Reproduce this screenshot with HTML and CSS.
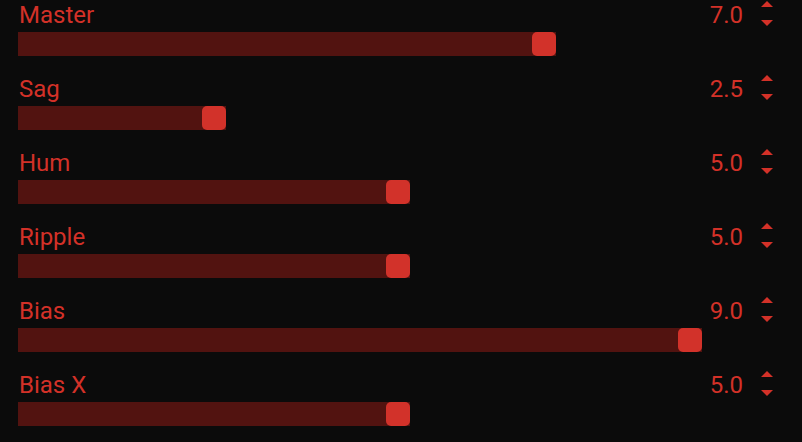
FILE: index.html
```html
<!DOCTYPE html>
<html>
<head>
<meta charset="utf-8">
<link rel="stylesheet" href="styles.css">
</head>
<body>
<div class="panel">
  <div class="row">
    <div class="head"><span class="label">Master</span><span class="value">7.0</span><svg class="spin" width="12" height="28" viewBox="0 0 12 28"><polygon points="6,1 12,7 0,7"/><polygon points="0,20 12,20 6,26"/></svg></div>
    <div class="track"><div class="fill" style="width:538px"><div class="knob"></div></div></div>
  </div>
  <div class="row">
    <div class="head"><span class="label">Sag</span><span class="value">2.5</span><svg class="spin" width="12" height="28" viewBox="0 0 12 28"><polygon points="6,1 12,7 0,7"/><polygon points="0,20 12,20 6,26"/></svg></div>
    <div class="track"><div class="fill" style="width:208px"><div class="knob"></div></div></div>
  </div>
  <div class="row">
    <div class="head"><span class="label">Hum</span><span class="value">5.0</span><svg class="spin" width="12" height="28" viewBox="0 0 12 28"><polygon points="6,1 12,7 0,7"/><polygon points="0,20 12,20 6,26"/></svg></div>
    <div class="track"><div class="fill" style="width:392px"><div class="knob"></div></div></div>
  </div>
  <div class="row">
    <div class="head"><span class="label">Ripple</span><span class="value">5.0</span><svg class="spin" width="12" height="28" viewBox="0 0 12 28"><polygon points="6,1 12,7 0,7"/><polygon points="0,20 12,20 6,26"/></svg></div>
    <div class="track"><div class="fill" style="width:392px"><div class="knob"></div></div></div>
  </div>
  <div class="row">
    <div class="head"><span class="label">Bias</span><span class="value">9.0</span><svg class="spin" width="12" height="28" viewBox="0 0 12 28"><polygon points="6,1 12,7 0,7"/><polygon points="0,20 12,20 6,26"/></svg></div>
    <div class="track"><div class="fill" style="width:684px"><div class="knob"></div></div></div>
  </div>
  <div class="row">
    <div class="head"><span class="label">Bias X</span><span class="value">5.0</span><svg class="spin" width="12" height="28" viewBox="0 0 12 28"><polygon points="6,1 12,7 0,7"/><polygon points="0,20 12,20 6,26"/></svg></div>
    <div class="track"><div class="fill" style="width:392px"><div class="knob"></div></div></div>
  </div>
</div>
</body>
</html>
```
FILE: styles.css
```css
html, body {
  margin: 0;
  padding: 0;
  background: #0b0b0b;
  width: 802px;
  height: 442px;
  overflow: hidden;
}
.panel {
  padding: 0 27px 0 18px;
  font-family: Roboto, "Liberation Sans", sans-serif;
  color: #d33128;
}
.row {
  height: 74px;
  display: flex;
  flex-direction: column;
}
.head {
  display: flex;
  align-items: flex-start;
  height: 32px;
}
.label {
  flex: 1;
  font-size: 24px;
  line-height: 28px;
  margin-top: 1px;
  padding-left: 1px;
}
.value {
  font-size: 24px;
  line-height: 28px;
  margin-top: 1px;
}
.spin {
  margin-left: 18px;
  margin-right: 2px;
  fill: #d33128;
}
.track {
  height: 24px;
}
.fill {
  height: 24px;
  background: #521310;
  display: flex;
  justify-content: flex-end;
}
.knob {
  width: 24px;
  height: 24px;
  border-radius: 5px;
  background: #d2322a;
}
```
